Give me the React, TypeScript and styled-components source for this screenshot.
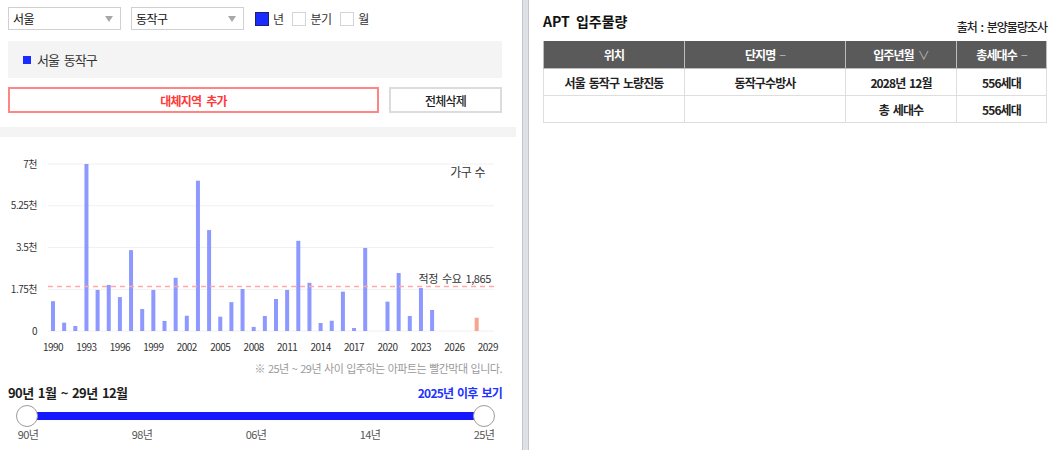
import React from 'react';
import styled, { createGlobalStyle } from 'styled-components';

const GlobalStyle = createGlobalStyle`
	body {
		margin: 0;
		background: #fff;
		font-family: "Noto Sans CJK KR", "Noto Sans", sans-serif;
		color: #222;
	}
`;

const KR = '"Noto Sans CJK KR", "Noto Sans", sans-serif';

// 1990 ~ 2029 입주 세대수
const counts = [
	1250, 350, 210, 7000, 1720, 1930, 1420, 3390, 920, 1720,
	420, 2230, 640, 6300, 4230, 600, 1210, 1760, 170, 630,
	1340, 1720, 3780, 2020, 335, 430, 1650, 125, 3480, 0,
	1230, 2430, 630, 1800, 880, 0, 0, 0, 556, 0,
];
const FIRST_YEAR = 1990;
const DEMAND = 1865;

const Page = styled.div`
	display: flex;
	height: 100vh;
	overflow: hidden;
`;

const LeftPane = styled.div`
	width: 516px;
	flex-shrink: 0;
`;

const Controls = styled.div`
	padding: 7px 14px 0 8px;
`;

const FilterBar = styled.div`
	display: flex;
	align-items: center;
	height: 23px;
`;

const Select = styled.div<{ $gap?: number }>`
	position: relative;
	box-sizing: border-box;
	width: 113px;
	height: 23px;
	margin-right: ${p => p.$gap ?? 10}px;
	border: 1px solid #d0d0d0;
	padding-left: 4px;
	font-size: 12px;
	line-height: 21px;
	letter-spacing: -0.6px;
	color: #111;

	&::after {
		content: '';
		position: absolute;
		right: 7px;
		top: 8px;
		border-left: 4px solid transparent;
		border-right: 4px solid transparent;
		border-top: 6px solid #a8a8a8;
	}
`;

const Check = styled.label`
	display: flex;
	align-items: center;
	margin-right: 9px;
	font-size: 12px;
	letter-spacing: -0.6px;
	color: #333;
`;

const Box = styled.span<{ $on?: boolean }>`
	box-sizing: border-box;
	width: 14px;
	height: 14px;
	margin-right: 4px;
	background: ${p => (p.$on ? '#1a2bff' : '#fff')};
	border: 1px solid ${p => (p.$on ? '#1a2270' : '#d4d4d4')};
`;

const RegionBox = styled.div`
	display: flex;
	align-items: center;
	height: 37px;
	margin-top: 11px;
	padding-left: 15px;
	background: #f4f4f4;
	font-size: 13px;
	letter-spacing: -1px;
	word-spacing: 3px;
	color: #333;
`;

const Swatch = styled.span`
	width: 8px;
	height: 8px;
	margin-right: 6px;
	background: #1a2bff;
`;

const ButtonRow = styled.div`
	display: flex;
	gap: 10px;
	margin-top: 9px;
`;

const Button = styled.button<{ $danger?: boolean }>`
	box-sizing: border-box;
	height: 26px;
	padding: 0;
	background: #fff;
	font-family: ${KR};
	font-size: 12px;
	letter-spacing: -0.8px;
	word-spacing: 3px;
	font-weight: ${p => (p.$danger ? 700 : 500)};
	color: ${p => (p.$danger ? '#ff3a3a' : '#222')};
	border: 2px solid ${p => (p.$danger ? '#ff8484' : '#dcdcdc')};
	flex: ${p => (p.$danger ? '0 0 371px' : '1')};
`;

const Band = styled.div`
	height: 10px;
	margin-top: 14px;
	background: #f4f4f4;
`;

const ChartSvg = styled.svg`
	display: block;
	font-family: ${KR};
`;

const Note = styled.div`
	margin: 1px 14px 0 0;
	text-align: right;
	font-size: 11px;
	line-height: 16px;
	letter-spacing: -0.5px;
	word-spacing: 1px;
	color: #9a9a9a;
`;

const RangeHeader = styled.div`
	display: flex;
	justify-content: space-between;
	align-items: center;
	height: 18px;
	margin: 7px 14px 0 8px;
	word-spacing: 2px;
`;

const RangeTitle = styled.span`
	font-size: 13px;
	font-weight: 700;
	letter-spacing: -0.6px;
	color: #1d1d1d;
`;

const MoreLink = styled.span`
	font-size: 12px;
	font-weight: 700;
	letter-spacing: -0.8px;
	color: #2233ff;
`;

const Slider = styled.div`
	position: relative;
	height: 22px;
	margin: 4px 21px 0 16px;
`;

const Track = styled.div`
	position: relative;
	top: 7px;
	height: 8px;
	margin: 0 11px;
	background: #1717ff;
`;

const Handle = styled.span<{ $side: 'left' | 'right' }>`
	position: absolute;
	top: 0;
	${p => p.$side}: 0;
	box-sizing: border-box;
	width: 22px;
	height: 22px;
	border-radius: 50%;
	background: #fff;
	border: 1px solid #9c9c9c;
`;

const Ticks = styled.div`
	display: flex;
	justify-content: space-between;
	margin: 0 20px 0 16px;
`;

const Tick = styled.span<{ $shift?: number }>`
	display: flex;
	justify-content: center;
	width: 24px;
	font-size: 11px;
	line-height: 14px;
	letter-spacing: -0.6px;
	color: #555;
	white-space: nowrap;
`;

const Splitter = styled.div`
	flex-shrink: 0;
	width: 5px;
	margin-left: 6px;
	background: #e0e0e7;
	border-left: 1px solid #c4c4cc;
	border-right: 1px solid #c4c4cc;
`;

const RightPane = styled.div`
	flex: 1;
	padding: 0 8px 0 14px;
`;

const TitleRow = styled.div`
	display: flex;
	justify-content: space-between;
	align-items: flex-start;
	box-sizing: border-box;
	height: 41px;
	padding-top: 11px;
`;

const Title = styled.h2`
	margin: 0;
	font-size: 14px;
	line-height: 20px;
	font-weight: 700;
	word-spacing: 3px;
	color: #111;
`;

const Source = styled.span`
	margin-top: 8px;
	font-size: 12px;
	line-height: 16px;
	font-weight: 500;
	letter-spacing: -1px;
	word-spacing: 2px;
	color: #222;
`;

const Table = styled.table`
	width: 503px;
	border-collapse: collapse;
	table-layout: fixed;
	font-size: 12px;
	letter-spacing: -0.9px;
	word-spacing: 2px;
`;

const Th = styled.th`
	height: 27px;
	padding: 0;
	background: #5a5a5a;
	color: #fff;
	font-weight: 700;
	border: 1px solid #bdbdbd;
	border-top: none;
`;

const Td = styled.td`
	height: 26px;
	padding: 0;
	text-align: center;
	font-weight: 700;
	color: #222;
	border: 1px solid #dedede;
`;

const Sort = styled.span`
	margin-left: 4px;
	font-weight: 400;
	color: #b9b9b9;
`;

const BarChart: React.FC<{ data: number[] }> = ({ data }) => {
	const left = 48;
	const right = 494;
	const top = 27;
	const zero = 194;
	const max = 7000;
	const step = 11.15;
	const y = (v: number) => zero - (v / max) * (zero - top);
	const ticks = [
		{ v: 0, label: '0' },
		{ v: 1750, label: '1.75천' },
		{ v: 3500, label: '3.5천' },
		{ v: 5250, label: '5.25천' },
		{ v: 7000, label: '7천' },
	];

	return (
		<ChartSvg width={516} height={222} viewBox="0 0 516 222">
			{ticks.map(t => (
				<g key={t.v}>
					<line x1={left} x2={right} y1={y(t.v)} y2={y(t.v)} stroke="#f0f0f0" strokeWidth={1} />
					<text x={37} y={y(t.v) + 3.5} textAnchor="end" fontSize={10} fill="#333" letterSpacing={-0.5}>
						{t.label}
					</text>
				</g>
			))}
			{data.map((v, i) => {
				const year = FIRST_YEAR + i;
				const cx = 53 + i * step;
				return v > 0 ? (
					<rect
						key={year}
						x={cx - 2}
						y={y(v)}
						width={4}
						height={zero - y(v)}
						fill={year >= 2025 ? '#f5a590' : '#8d99ff'}
					/>
				) : null;
			})}
			<line
				x1={left}
				x2={right}
				y1={y(DEMAND)}
				y2={y(DEMAND)}
				stroke="#ffa8a8"
				strokeWidth={1.5}
				strokeDasharray="5 4"
			/>
			<text x={491} y={y(DEMAND) - 4} textAnchor="end" fontSize={11} fill="#333" letterSpacing={-0.4} wordSpacing={2}>
				적정 수요 1,865
			</text>
			<text x={485} y={40} textAnchor="end" fontSize={12} fill="#333" letterSpacing={-0.5} wordSpacing={1}>
				가구 수
			</text>
			{data.map((_, i) =>
				i % 3 === 0 ? (
					<text key={i} x={53 + i * step} y={213.5} textAnchor="middle" fontSize={10} fill="#333" letterSpacing={-0.5}>
						{FIRST_YEAR + i}
					</text>
				) : null
			)}
		</ChartSvg>
	);
};

const App: React.FC = () => (
	<Page>
		<GlobalStyle />
		<LeftPane>
			<Controls>
				<FilterBar>
					<Select>서울</Select>
					<Select $gap={11}>동작구</Select>
					<Check><Box $on />년</Check>
					<Check><Box />분기</Check>
					<Check><Box />월</Check>
				</FilterBar>
				<RegionBox>
					<Swatch />
					서울 동작구
				</RegionBox>
				<ButtonRow>
					<Button $danger>대체지역 추가</Button>
					<Button>전체삭제</Button>
				</ButtonRow>
			</Controls>
			<Band />
			<BarChart data={counts} />
			<Note>※ 25년 ~ 29년 사이 입주하는 아파트는 빨간막대 입니다.</Note>
			<RangeHeader>
				<RangeTitle>90년 1월 ~ 29년 12월</RangeTitle>
				<MoreLink>2025년 이후 보기</MoreLink>
			</RangeHeader>
			<Slider>
				<Track />
				<Handle $side="left" />
				<Handle $side="right" />
			</Slider>
			<Ticks>
				{['90년', '98년', '06년', '14년', '25년'].map(t => (
					<Tick key={t}>{t}</Tick>
				))}
			</Ticks>
		</LeftPane>
		<Splitter />
		<RightPane>
			<TitleRow>
				<Title>APT 입주물량</Title>
				<Source>출처 : 분양물량조사</Source>
			</TitleRow>
			<Table>
				<colgroup>
					<col style={{ width: 141 }} />
					<col style={{ width: 161 }} />
					<col style={{ width: 111 }} />
					<col style={{ width: 90 }} />
				</colgroup>
				<thead>
					<tr>
						<Th>위치</Th>
						<Th>단지명<Sort>−</Sort></Th>
						<Th>입주년월<Sort>∨</Sort></Th>
						<Th>총세대수<Sort>−</Sort></Th>
					</tr>
				</thead>
				<tbody>
					<tr>
						<Td>서울 동작구 노량진동</Td>
						<Td>동작구수방사</Td>
						<Td>2028년 12월</Td>
						<Td>556세대</Td>
					</tr>
					<tr>
						<Td />
						<Td />
						<Td>총 세대수</Td>
						<Td>556세대</Td>
					</tr>
				</tbody>
			</Table>
		</RightPane>
	</Page>
);

export default App;
